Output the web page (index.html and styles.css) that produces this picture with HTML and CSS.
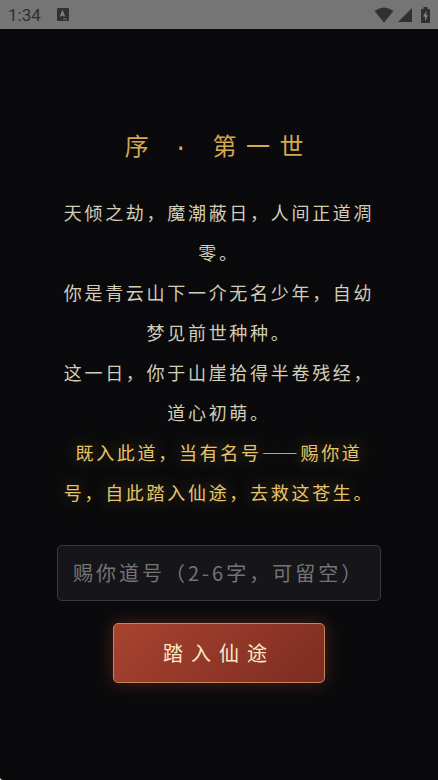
FILE: index.html
```html
<!DOCTYPE html>
<html lang="zh-CN">
<head>
<meta charset="utf-8">
<meta name="viewport" content="width=device-width, initial-scale=1">
<title>序 · 第一世</title>
<link rel="stylesheet" href="styles.css">
</head>
<body>
<div class="screen">
  <header class="status">
    <div class="status-group">
      <span class="clock">1:34</span>
      <svg width="12" height="13" viewBox="0 0 12 13" aria-hidden="true">
        <rect width="12" height="13" rx="1" fill="#313131"/>
        <path d="M3.500 8.500 L5.500 3.500 L7.500 8.500 M4 7 H7" fill="none" stroke="#858585" stroke-width="1.300"/>
        <path d="M6 11 H10" stroke="#707070" stroke-width="1"/>
      </svg>
    </div>
    <div class="status-group icons">
      <svg width="20" height="16" viewBox="0 0 20 16" aria-hidden="true">
        <path d="M0.500 4 Q10 -3 19.500 4 L10 15.500 Z" fill="#303030"/>
      </svg>
      <svg width="14" height="14" viewBox="0 0 14 14" aria-hidden="true">
        <path d="M14 0 V14 H0 Z" fill="#303030"/>
      </svg>
      <svg class="battery" width="9" height="16" viewBox="0 0 9 16" aria-hidden="true">
        <path d="M2.500 0 H6.500 V2 H8 Q9 2 9 3 V15 Q9 16 8 16 H1 Q0 16 0 15 V3 Q0 2 1 2 H2.500 Z" fill="#303030"/>
        <path d="M5.500 4 L2 9.500 H4 V14 L7 8.300 H5.200 Z" fill="#858585"/>
      </svg>
    </div>
  </header>
  <main class="prologue">
    <h1 class="title">序 <span class="dot">·</span> 第一世</h1>
    <div class="story">
      <p>天倾之劫，魔潮蔽日，人间正道凋零。</p>
      <p>你是青云山下一介无名少年，自幼梦见前世种种。</p>
      <p>这一日，你于山崖拾得半卷残经，道心初萌。</p>
      <p class="calling">既入此道，当有名号——赐你道号，自此踏入仙途，去救这苍生。</p>
    </div>
    <form class="naming">
      <input class="name-input" type="text" aria-label="道号" placeholder="赐你道号（2-6字，可留空）">
      <button class="enter" type="button">踏入仙途</button>
    </form>
  </main>
</div>
</body>
</html>
```
FILE: styles.css
```css
* {
  box-sizing: border-box;
}

html {
  background: #fff;
}

body {
  margin: 0;
  font-family: "Noto Sans CJK SC", sans-serif;
}

.screen {
  display: flex;
  flex-direction: column;
  min-height: 100vh;
  background: #0a0a0c;
  border-bottom-left-radius: 3px;
}

.status {
  display: flex;
  align-items: center;
  justify-content: space-between;
  height: 29px;
  padding: 0 8px;
  background: #757575;
  color: #303030;
}

.status-group {
  display: flex;
  align-items: center;
  gap: 16px;
}

.icons {
  gap: 4px;
}

.battery {
  margin-left: 5px;
}

.clock {
  font: 400 17px/28px Roboto, sans-serif;
}

.prologue {
  flex: 1;
  display: flex;
  flex-direction: column;
  justify-content: center;
  padding: 0 57px;
  text-align: center;
}

.title {
  margin: 0 0 29px;
  color: #d4a94f;
  font-size: 24px;
  font-weight: 400;
  line-height: 36px;
  letter-spacing: 0.4em;
}

.dot {
  font-family: "Liberation Mono", monospace;
  line-height: 1;
}

.story {
  margin-bottom: 33px;
  color: #d4cdb8;
  font-size: 18px;
  line-height: 40px;
  letter-spacing: 0.15em;
}

.story p {
  margin: 0;
}

.story .calling {
  color: #e8c468;
  text-shadow: 0 0 18px rgba(212, 169, 79, 0.4);
}

.naming {
  display: flex;
  flex-direction: column;
  align-items: center;
  gap: 22px;
}

.name-input {
  width: 100%;
  height: 56px;
  padding: 0 15px;
  border: 1px solid #3a3845;
  border-radius: 5px;
  background: #16151a;
  color: #d4cdb8;
  font: inherit;
  font-size: 20px;
  letter-spacing: 0.15em;
}

.name-input::placeholder {
  color: #757575;
}

.enter {
  height: 60px;
  padding: 0 49px;
  border: 1px solid #c58657;
  border-radius: 5px;
  background: linear-gradient(135deg, #a8432f, #7d2c22);
  box-shadow: 0 0 18px rgba(168, 67, 47, 0.4);
  color: #fbe9c8;
  font: inherit;
  font-size: 20px;
  letter-spacing: 0.4em;
}
```
